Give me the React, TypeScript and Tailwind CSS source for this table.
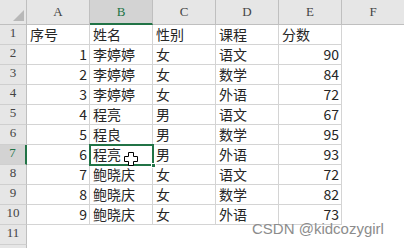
import React from 'react';

const rows: (string | number)[][] = [
  ['序号', '姓名', '性别', '课程', '分数'],
  [1, '李婷婷', '女', '语文', 90],
  [2, '李婷婷', '女', '数学', 84],
  [3, '李婷婷', '女', '外语', 72],
  [4, '程亮', '男', '语文', 67],
  [5, '程良', '男', '数学', 95],
  [6, '程亮', '男', '外语', 93],
  [7, '鲍晓庆', '女', '语文', 72],
  [8, '鲍晓庆', '女', '数学', 82],
  [9, '鲍晓庆', '女', '外语', 73],
];

const cols = ['A', 'B', 'C', 'D', 'E', 'F'];
const cjk = { fontFamily: '"Noto Sans CJK SC", "Noto Sans", sans-serif' };
const serif = { fontFamily: '"Liberation Serif", "DejaVu Serif", serif' };

export default function App() {
  const bodyRows = 12;
  return (
    <div className="relative w-[404px] h-[248px] overflow-hidden bg-white">
      <div className="grid grid-cols-[27px_63px_63px_63px_63px_63px_63px] grid-rows-[25px_repeat(12,20px)]">
        {/* corner */}
        <div className="relative bg-[#e6e6e6] border-r border-b border-[#bfbfbf]">
          <svg className="absolute right-[2px] bottom-[3px]" width="11" height="11" viewBox="0 0 11 11">
            <polygon points="11,0 11,11 0,11" fill="#b8b8b8" />
          </svg>
        </div>
        {cols.map((c) => (
          <div
            key={c}
            className={
              c === 'B'
                ? 'flex items-end justify-center pb-[2px] bg-[#d3d3d3] border-r border-[#bfbfbf] border-b-2 border-b-[#217346] text-[#217346] text-[13px]'
                : 'flex items-end justify-center pb-[3px] bg-[#e6e6e6] border-r border-b border-[#bfbfbf] text-[#444] text-[13px]'
            }
            style={serif}
          >
            {c}
          </div>
        ))}
        {Array.from({ length: bodyRows }).map((_, r) => {
          const rn = r + 1;
          const data = rows[r];
          const sel = rn === 7;
          return (
            <React.Fragment key={rn}>
              <div
                className={
                  sel
                    ? 'flex items-end justify-center pb-[2px] bg-[#d3d3d3] border-b border-b-[#cfcfcf] border-r-2 border-r-[#217346] text-[#217346] text-[13px]'
                    : 'flex items-end justify-center pb-[2px] bg-[#e6e6e6] border-b border-b-[#cfcfcf] border-r border-r-[#bfbfbf] text-[#444] text-[13px]'
                }
                style={serif}
              >
                {rn <= 11 ? rn : ''}
              </div>
              {cols.map((c, ci) => {
                const v = data && ci < 5 ? data[ci] : undefined;
                const inData = !!data && ci < 5;
                const isNum = typeof v === 'number';
                return (
                  <div
                    key={c}
                    className={
                      (inData ? 'border-r border-b border-[#d4d4d4] ' : '') +
                      'flex items-end pb-[1px] text-[14px] leading-[18px] text-[#262626] ' +
                      (isNum ? 'justify-end pr-[2px]' : 'justify-start pl-[3px]')
                    }
                    style={cjk}
                  >
                    {v}
                  </div>
                );
              })}
            </React.Fragment>
          );
        })}
      </div>

      {/* selected cell B7 */}
      <div className="absolute left-[89px] top-[144px] w-[65px] h-[22px] border-2 border-[#217346]" />
      <div className="absolute left-[151px] top-[163px] w-[5px] h-[5px] bg-[#217346] border border-white" />

      {/* cursor */}
      <svg className="absolute left-[124px] top-[152px]" width="14" height="14" viewBox="0 0 14 14">
        <polygon
          points="4.5,0.5 9.5,0.5 9.5,4.5 13.5,4.5 13.5,9.5 9.5,9.5 9.5,13.5 4.5,13.5 4.5,9.5 0.5,9.5 0.5,4.5 4.5,4.5"
          fill="#ffffff"
          stroke="#000000"
          strokeWidth="1"
        />
      </svg>

      {/* watermark */}
      <div
        className="absolute left-[252px] top-[220px] text-[15px] leading-[18px] text-[#8c8c8c] whitespace-nowrap"
        style={{ fontFamily: '"Liberation Sans", Arial, sans-serif' }}
      >
        CSDN @kidcozygirl
      </div>
    </div>
  );
}
